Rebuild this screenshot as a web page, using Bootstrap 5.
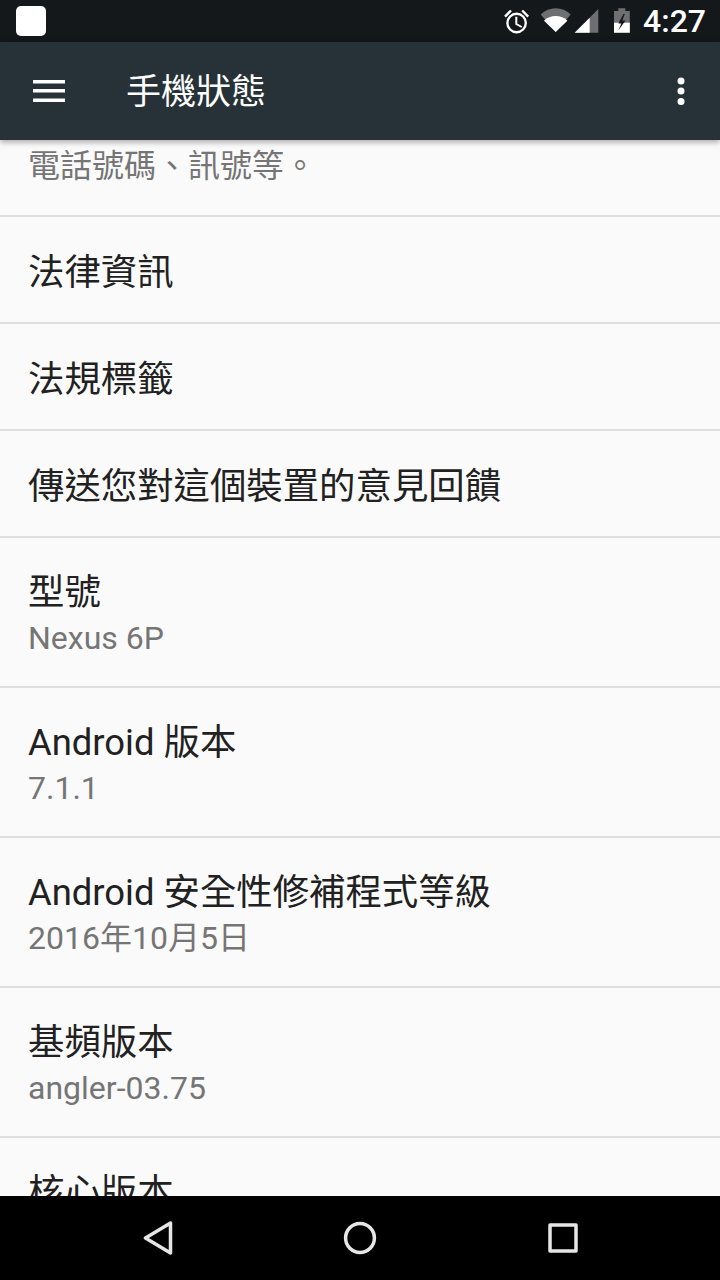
<!DOCTYPE html>
<html lang="zh-Hant">
<head>
<meta charset="utf-8">
<title>手機狀態</title>
<link rel="stylesheet" href="https://cdn.jsdelivr.net/npm/bootstrap@5.3.0/dist/css/bootstrap.min.css">
<style>
  html, body { height: 1280px; }
  body {
    width: 720px; overflow: hidden; background: #fafafa;
    font-family: Roboto, "Noto Sans CJK TC", sans-serif;
  }
  .phone { height: 1280px; }
  .status-strip { height: 42px; background: #14181b; color: #fff; padding: 0 14px 0 16px; }
  .app-square { width: 30px; height: 30px; background: #fff; border-radius: 5px; }
  .clock-text { font-size: 32px; line-height: 42px; font-weight: 500; margin-left: 12px; }
  .gap-alarm { margin-right: 9px; }
  .gap-signal { margin-left: 2px; }
  .gap-battery { margin-left: 14px; }
  .tool-strip {
    height: 98px; background: #263238; color: #fff; padding: 0 35px 0 32px;
    position: relative; z-index: 2; box-shadow: 0 2px 6px rgba(0,0,0,.35);
  }
  .strip-title { font-size: 35px; line-height: 1; margin-left: 60px; padding-top: 2px; }
  .settings-pane { flex: 1 1 auto; min-height: 0; overflow: hidden; background: #fafafa; }
  .settings-pane .list-group-item {
    background: transparent; padding: 0 28px; border-color: #dedede; border-width: 0 0 2px;
    border-radius: 0; display: flex; flex-direction: column; justify-content: flex-start;
  }
  .row-head { font-size: 36.4px; line-height: 48px; color: #212121; white-space: nowrap; }
  .row-note { font-size: 32px; line-height: 44px; color: #757575; white-space: nowrap; }
  .row-cut { height: 77px; padding-top: 4px !important; }
  .row-single { height: 107px; padding-top: 32px !important; }
  .row-double { height: 150px; padding-top: 31px !important; }
  .row-double .row-head { line-height: 47px; }
  .row-end { height: 90px; padding-top: 31px !important; border: 0 !important; }
  .nav-strip { height: 84px; background: #000; padding: 0 142px 0 143px; }
</style>
</head>
<body>
<div class="phone d-flex flex-column">
  <div class="status-strip d-flex align-items-center flex-shrink-0">
    <div class="app-square"></div>
    <div class="ms-auto d-flex align-items-center">
      <!-- alarm clock -->
      <svg class="gap-alarm" width="28" height="42" viewBox="504 0 28 42" fill="none" stroke="#fff">
        <circle cx="517.600" cy="23" r="9.200" stroke-width="2.400"/>
        <path d="M517.300 16.700V24L522.700 27" stroke-width="2"/>
        <path d="M506 16.700 512 10.500M529.200 16.700 523.200 10.500" stroke-width="2.400"/>
      </svg>
      <!-- wifi -->
      <svg width="32" height="42" viewBox="541 0 32 42">
        <path d="M541.700 14.500C550 6 563.500 6 571.700 14.500L556.700 32Z" fill="#6d6f71"/>
        <path d="M545 20.700C551 14.500 562.500 14.500 568.400 20.700L556.700 32Z" fill="#fff"/>
      </svg>
      <!-- cell signal -->
      <svg class="gap-signal" width="25" height="42" viewBox="575 0 25 42">
        <path d="M599.300 9V32.700H575.700Z" fill="#6d6f71"/>
        <path d="M590.700 17.800V32.700H575.700Z" fill="#fff"/>
      </svg>
      <!-- battery charging -->
      <svg class="gap-battery" width="18" height="42" viewBox="614 0 18 42">
        <path d="M619.300 8.300h7v2.700h4.500V32.700H615V11h4.300Z" fill="#6d6f71"/>
        <path d="M615 22.700h15.800V32.700H615Z" fill="#fff"/>
        <path d="M624.500 14 619.300 23.500H622.300L619.300 30.500 626.500 20.500H623.300L625.800 14Z" fill="#14181b"/>
      </svg>
      <span class="clock-text">4:27</span>
    </div>
  </div>

  <div class="tool-strip d-flex align-items-center flex-shrink-0">
    <svg width="34" height="22" viewBox="0 0 34 22" fill="#fff">
      <rect width="32" height="3.500" x="1" y="0"/>
      <rect width="32" height="3.500" x="1" y="9"/>
      <rect width="32" height="3.500" x="1" y="18.500"/>
    </svg>
    <div class="strip-title">手機狀態</div>
    <svg class="ms-auto" width="8" height="28" viewBox="0 0 8 28" fill="#fff">
      <circle cx="4" cy="4" r="3.500"/><circle cx="4" cy="14" r="3.500"/><circle cx="4" cy="24.500" r="3.500"/>
    </svg>
  </div>

  <main class="settings-pane">
    <div class="list-group list-group-flush">
      <div class="list-group-item row-cut"><div class="row-note">電話號碼、訊號等。</div></div>
      <div class="list-group-item row-single"><div class="row-head">法律資訊</div></div>
      <div class="list-group-item row-single"><div class="row-head">法規標籤</div></div>
      <div class="list-group-item row-single"><div class="row-head">傳送您對這個裝置的意見回饋</div></div>
      <div class="list-group-item row-double"><div class="row-head">型號</div><div class="row-note">Nexus 6P</div></div>
      <div class="list-group-item row-double"><div class="row-head">Android 版本</div><div class="row-note">7.1.1</div></div>
      <div class="list-group-item row-double"><div class="row-head">Android 安全性修補程式等級</div><div class="row-note">2016年10月5日</div></div>
      <div class="list-group-item row-double"><div class="row-head">基頻版本</div><div class="row-note">angler-03.75</div></div>
      <div class="list-group-item row-end"><div class="row-head">核心版本</div></div>
    </div>
  </main>

  <div class="nav-strip d-flex align-items-center justify-content-between flex-shrink-0">
    <svg width="30" height="34" viewBox="0 0 30 34" fill="none" stroke="#e6e6e6" stroke-width="3.500" stroke-linejoin="round">
      <path d="M27.500 2V32L2.500 17Z"/>
    </svg>
    <svg width="34" height="34" viewBox="0 0 34 34" fill="none" stroke="#e6e6e6" stroke-width="3.500">
      <circle cx="17" cy="17" r="14.400"/>
    </svg>
    <svg width="31" height="30" viewBox="0 0 31 30" fill="none" stroke="#e6e6e6" stroke-width="3.500" stroke-linejoin="round">
      <rect x="3" y="2" width="26" height="26"/>
    </svg>
  </div>
</div>
<script src="https://cdn.jsdelivr.net/npm/bootstrap@5.3.0/dist/js/bootstrap.bundle.min.js"></script>
</body>
</html>
